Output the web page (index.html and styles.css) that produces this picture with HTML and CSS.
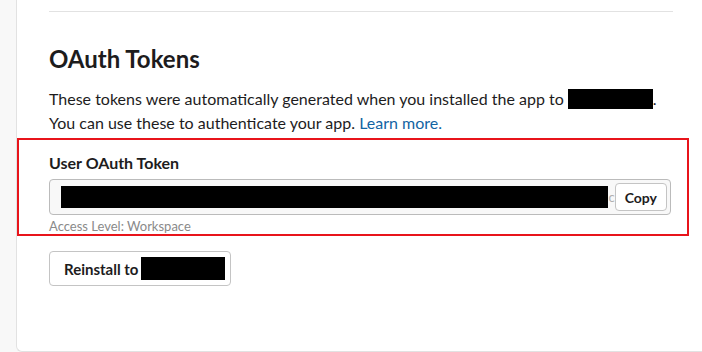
FILE: index.html
```html
<!DOCTYPE html>
<html lang="en">
<head>
    <meta charset="UTF-8">
    <meta name="viewport" content="width=device-width, initial-scale=1.0">
    <title>OAuth Tokens</title>
    <link rel="stylesheet" href="styles.css">
</head>
<body>
    <div class="page">
        <section class="card">
            <hr class="divider">

            <h2 class="title">OAuth Tokens</h2>
            <p class="intro">
                These tokens were automatically generated when you installed the app to <span class="redact redact-team"></span>.<br>
                You can use these to authenticate your app. <a href="#" class="link">Learn more.</a>
            </p>

            <div class="token-block">
                <label class="token-label">User OAuth Token</label>
                <div class="token-field">
                    <span class="token-value"><span class="redact redact-token"></span>c</span>
                    <button class="btn btn-copy">Copy</button>
                </div>
                <div class="token-hint">Access Level: Workspace</div>
            </div>

            <button class="btn btn-reinstall">Reinstall to <span class="redact redact-btn"></span></button>
        </section>
    </div>
</body>
</html>
```

FILE: styles.css
```css
* {
    margin: 0;
    padding: 0;
    box-sizing: border-box;
}

body {
    font-family: Lato, "Noto Sans", sans-serif;
    color: #1d1c1d;
    background: #f8f8f8;
    overflow: hidden;
}

.page {
    padding-left: 16px;
}

.card {
    background: white;
    border: 1px solid #e2e2e2;
    border-top: none;
    border-right: none;
    border-radius: 0 0 0 6px;
    height: 352px;
    padding: 11px 0 0 32px;
    width: 720px;
}

.divider {
    border: none;
    border-top: 1px solid #e2e2e2;
    width: 624px;
}

.title {
    font-size: 24px;
    font-weight: 700;
    margin-top: 32px;
    line-height: 30px;
}

.intro {
    font-size: 16px;
    line-height: 24px;
    margin-top: 13px;
    color: #1d1c1d;
}

.link {
    color: #1264a3;
    text-decoration: none;
}

.redact {
    display: inline-block;
    background: #000;
    vertical-align: middle;
}

.redact-team {
    width: 85px;
    height: 20px;
    margin-top: -3px;
}

/* the red outline is an annotation drawn round the token block */
.token-block {
    position: relative;
    padding-top: 14px;
    margin-top: 4px;
    width: 622px;
}

.token-block::after {
    content: '';
    position: absolute;
    left: -32px;
    top: -1px;
    width: 668px;
    height: 94px;
    border: 2px solid #e8141b;
    pointer-events: none;
}

.token-label {
    display: block;
    font-size: 16px;
    font-weight: 700;
    line-height: 20px;
}

.token-field {
    display: flex;
    align-items: center;
    justify-content: space-between;
    margin-top: 6px;
    height: 36px;
    background: #f8f8f8;
    border: 1px solid #bbbbbb;
    border-radius: 4px;
    padding: 0 3px 0 11px;
}

.token-value {
    display: flex;
    align-items: center;
    font-size: 13px;
    color: #b0b0b0;
    overflow: hidden;
}

.redact-token {
    width: 551px;
    height: 22px;
}

.btn {
    font-family: Lato, "Noto Sans", sans-serif;
    font-weight: 700;
    color: #1d1c1d;
    background: white;
    border: 1px solid #c4c4c4;
    border-radius: 4px;
    cursor: pointer;
}

.btn-copy {
    font-size: 14px;
    height: 28px;
    padding: 0 9px;
}

.token-hint {
    font-size: 13px;
    color: #8a8a8a;
    margin-top: 3px;
    line-height: 16px;
}

.btn-reinstall {
    display: flex;
    align-items: center;
    gap: 3px;
    margin-top: 17px;
    height: 35px;
    font-size: 15px;
    padding: 0 5px 0 14px;
}

.redact-btn {
    width: 84px;
    height: 23px;
}
```
